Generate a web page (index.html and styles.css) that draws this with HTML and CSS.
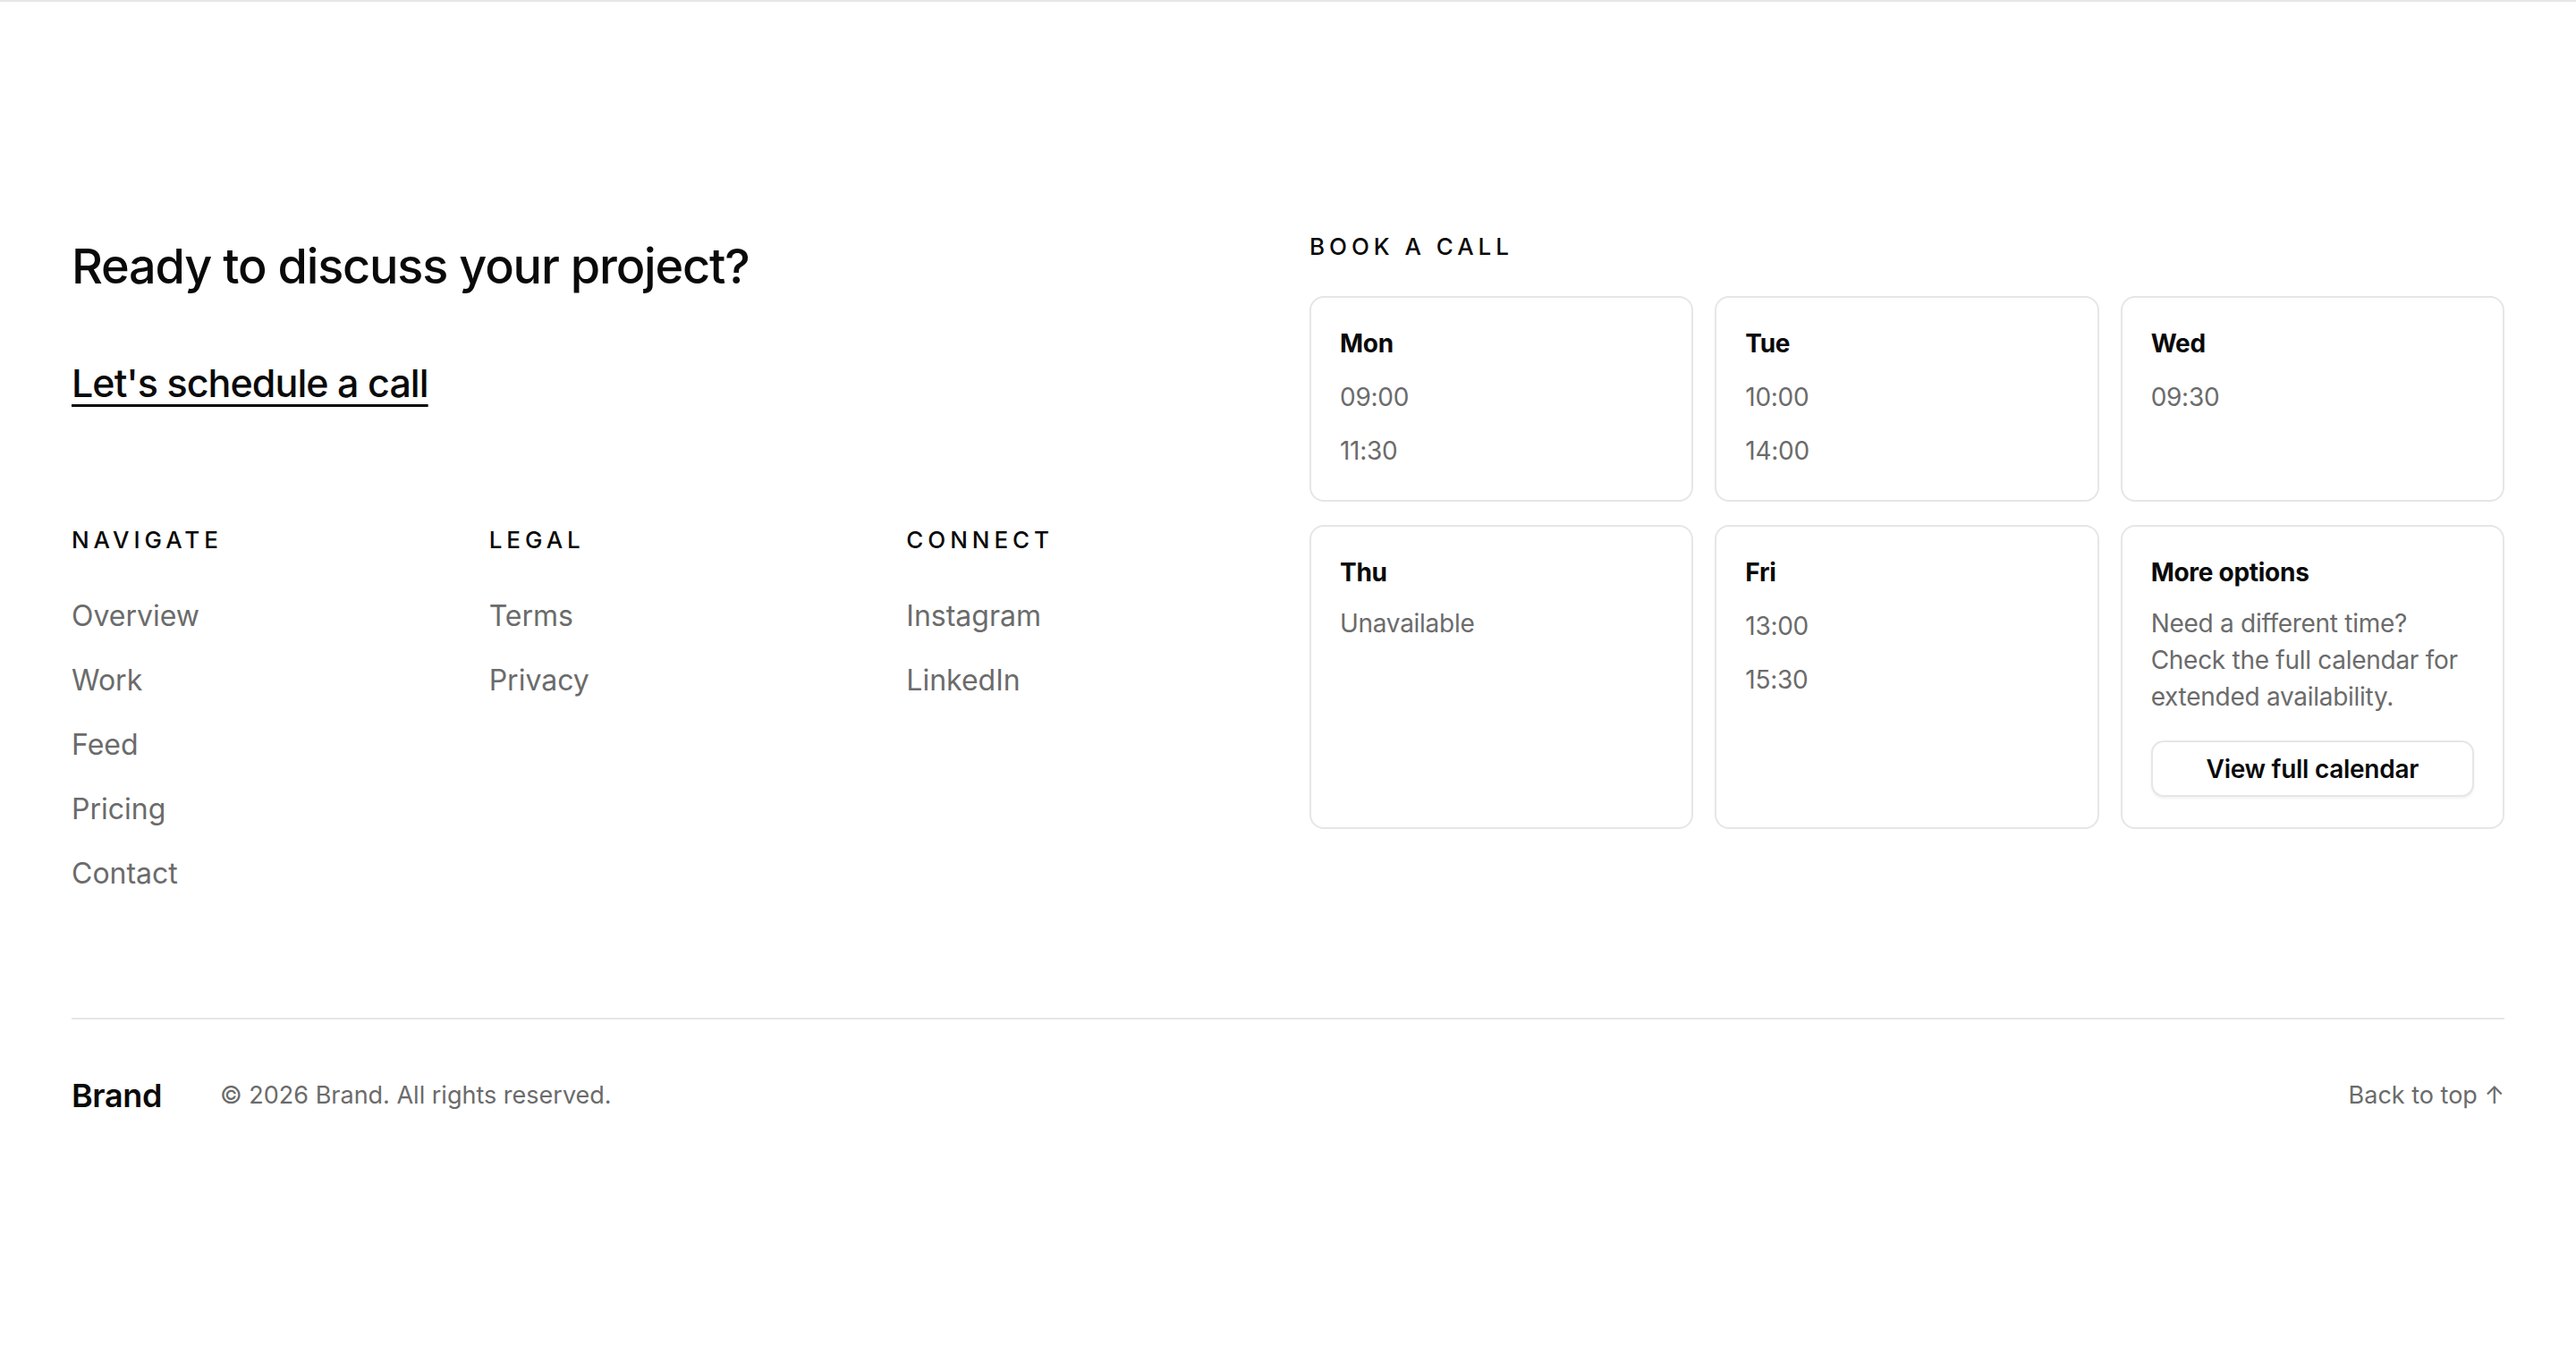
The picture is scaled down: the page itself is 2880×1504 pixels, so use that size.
FILE: index.html
```html
<!DOCTYPE html>
<html lang="en">
<head>
<meta charset="utf-8">
<title>Footer</title>
<link rel="stylesheet" href="styles.css">
</head>
<body>
<footer class="site-footer">
  <div class="footer-main">
    <div class="footer-intro">
      <h2 class="cta-title">Ready to discuss your project?</h2>
      <a class="cta-link" href="#">Let's schedule a call</a>
      <nav class="link-columns">
        <div class="link-col">
          <h3 class="eyebrow">Navigate</h3>
          <ul class="link-list">
            <li><a href="#">Overview</a></li>
            <li><a href="#">Work</a></li>
            <li><a href="#">Feed</a></li>
            <li><a href="#">Pricing</a></li>
            <li><a href="#">Contact</a></li>
          </ul>
        </div>
        <div class="link-col">
          <h3 class="eyebrow">Legal</h3>
          <ul class="link-list">
            <li><a href="#">Terms</a></li>
            <li><a href="#">Privacy</a></li>
          </ul>
        </div>
        <div class="link-col">
          <h3 class="eyebrow">Connect</h3>
          <ul class="link-list">
            <li><a href="#">Instagram</a></li>
            <li><a href="#">LinkedIn</a></li>
          </ul>
        </div>
      </nav>
    </div>

    <section class="booking">
      <h3 class="eyebrow">Book a call</h3>
      <div class="slot-grid">
        <div class="slot-card">
          <h4 class="slot-day">Mon</h4>
          <ul class="slot-times"><li>09:00</li><li>11:30</li></ul>
        </div>
        <div class="slot-card">
          <h4 class="slot-day">Tue</h4>
          <ul class="slot-times"><li>10:00</li><li>14:00</li></ul>
        </div>
        <div class="slot-card">
          <h4 class="slot-day">Wed</h4>
          <ul class="slot-times"><li>09:30</li></ul>
        </div>
        <div class="slot-card">
          <h4 class="slot-day">Thu</h4>
          <p class="slot-note">Unavailable</p>
        </div>
        <div class="slot-card">
          <h4 class="slot-day">Fri</h4>
          <ul class="slot-times"><li>13:00</li><li>15:30</li></ul>
        </div>
        <div class="slot-card">
          <h4 class="slot-day">More options</h4>
          <p class="slot-note">Need a different time? Check the full calendar for extended availability.</p>
          <button class="calendar-btn" type="button">View full calendar</button>
        </div>
      </div>
    </section>
  </div>

  <div class="footer-bottom">
    <span class="brand">Brand</span>
    <span class="copyright">© 2026 Brand. All rights reserved.</span>
    <a class="back-top" href="#">Back to top ↑</a>
  </div>
</footer>
</body>
</html>
```

FILE: styles.css
```css
* { box-sizing: border-box; }

body {
  margin: 0;
  background: #fff;
  color: #0a0a0a;
  font-family: Inter, "Noto Sans", sans-serif;
}

a { color: inherit; text-decoration: none; }

.site-footer {
  border-top: 2px solid #e6e6e6;
  padding: 256px 80px 64px;
}

.footer-main {
  display: grid;
  grid-template-columns: 1fr 1fr;
  gap: 48px;
  align-items: start;
}

/* left column: headline, call link, link columns */
.footer-intro {
  display: flex;
  flex-direction: column;
  align-items: flex-start;
}

.cta-title {
  margin: 0;
  font-size: 54px;
  line-height: 80px;
  font-weight: 500;
  letter-spacing: -0.022em;
}

.cta-link {
  margin-top: 65px;
  font-size: 43px;
  line-height: 50px;
  font-weight: 500;
  letter-spacing: -0.022em;
  text-decoration: underline;
  text-decoration-thickness: 3px;
  text-underline-offset: 8px;
}

.link-columns {
  align-self: stretch;
  display: grid;
  grid-template-columns: repeat(3, 1fr);
  gap: 64px;
  margin-top: 133px;
}

.eyebrow {
  margin: 0;
  font-size: 26px;
  line-height: 36px;
  font-weight: 500;
  letter-spacing: 0.19em;
  text-transform: uppercase;
}

.link-list {
  list-style: none;
  margin: 43px 0 0;
  padding: 0;
  display: flex;
  flex-direction: column;
  gap: 24px;
}

.link-list li {
  font-size: 32px;
  line-height: 48px;
  color: #6b6b6b;
}

/* right column: availability cards */
.slot-grid {
  display: grid;
  grid-template-columns: repeat(3, 1fr);
  column-gap: 24px;
  row-gap: 26px;
  margin-top: 37px;
}

.slot-card {
  border: 2px solid #e6e6e6;
  border-radius: 16px;
  padding: 34px 32px;
  display: flex;
  flex-direction: column;
}

.slot-day {
  margin: 0 0 20px;
  font-size: 28px;
  line-height: 34px;
  font-weight: 700;
  letter-spacing: -0.01em;
}

.slot-times {
  list-style: none;
  margin: 2px 0 0;
  padding: 0;
  display: flex;
  flex-direction: column;
  gap: 18px;
}

.slot-times li {
  font-size: 28px;
  line-height: 42px;
  color: #6b6b6b;
  letter-spacing: -0.01em;
}

.slot-note {
  margin: 0;
  font-size: 28px;
  line-height: 41px;
  color: #6b6b6b;
  letter-spacing: -0.01em;
}

.calendar-btn {
  margin-top: 28px;
  height: 63px;
  width: 100%;
  background: #fff;
  border: 2px solid #e6e6e6;
  border-radius: 14px;
  box-shadow: 0 2px 3px rgba(0, 0, 0, 0.06);
  font-family: inherit;
  font-size: 28px;
  font-weight: 600;
  color: #0a0a0a;
  letter-spacing: -0.01em;
}

/* bottom bar */
.footer-bottom {
  margin-top: 137px;
  border-top: 2px solid #e6e6e6;
  padding-top: 64px;
  display: flex;
  align-items: center;
}

.brand {
  font-size: 36px;
  line-height: 42px;
  font-weight: 600;
  letter-spacing: -0.01em;
}

.copyright {
  margin-left: 65px;
  font-size: 27px;
  line-height: 42px;
  color: #6b6b6b;
}

.back-top {
  margin-left: auto;
  font-size: 27px;
  line-height: 42px;
  color: #6b6b6b;
}
```
